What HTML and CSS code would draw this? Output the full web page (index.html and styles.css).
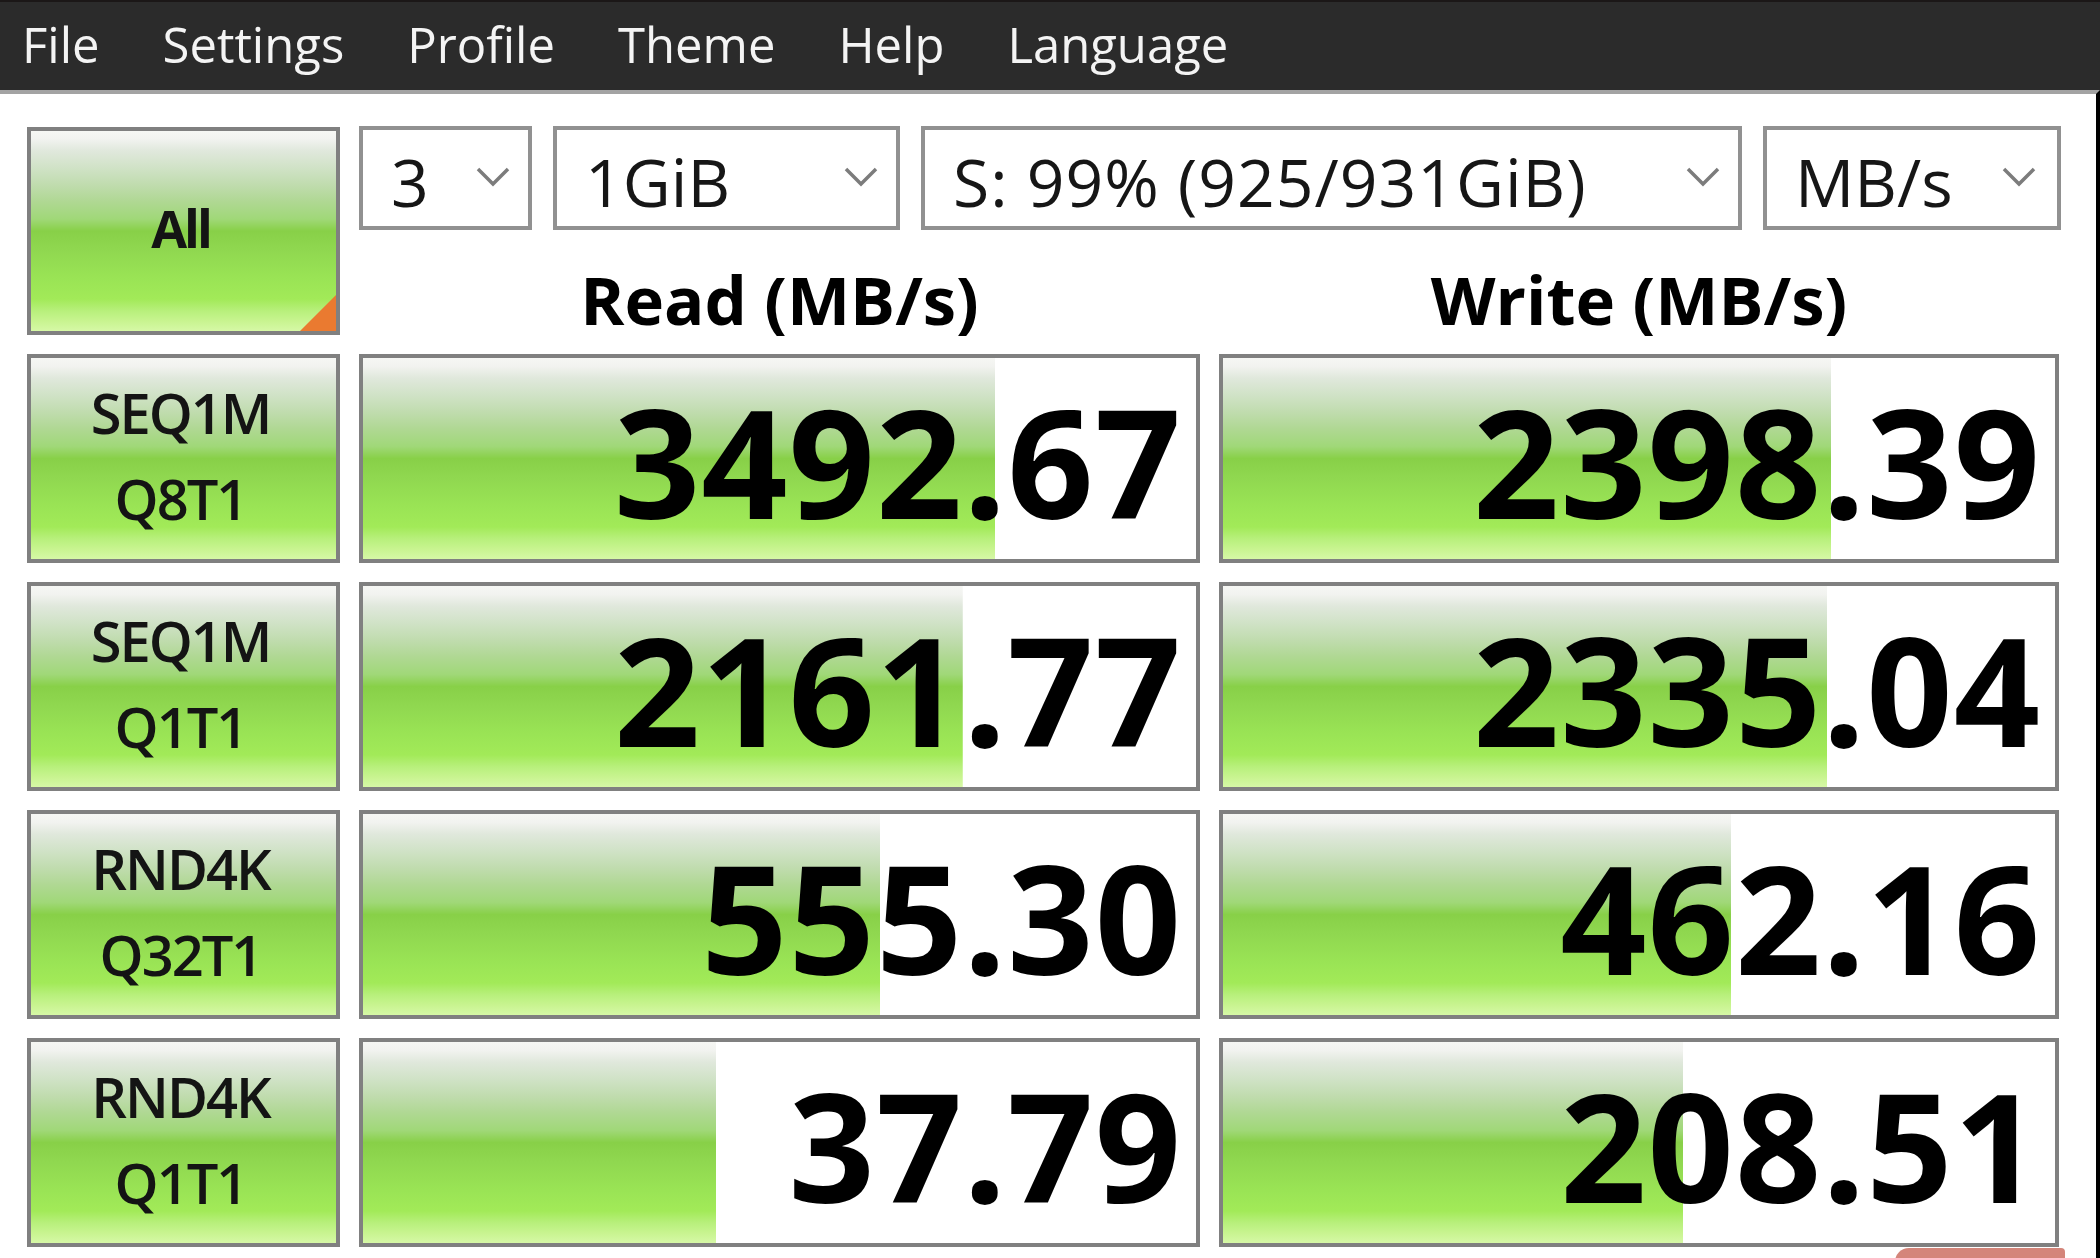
FILE: index.html
```html
<!DOCTYPE html>
<html lang="en">
<head>
<meta charset="utf-8">
<title>CrystalDiskMark</title>
<link rel="stylesheet" href="styles.css">
</head>
<body>
<nav class="menubar">
  <span class="menu-item">File</span>
  <span class="menu-item">Settings</span>
  <span class="menu-item">Profile</span>
  <span class="menu-item">Theme</span>
  <span class="menu-item">Help</span>
  <span class="menu-item">Language</span>
</nav>
<main class="content">
  <div class="grid">
    <div class="label all">All</div>
    <div class="top">
      <div class="dropdowns">
        <div class="dropdown dd-count"><span class="dd-text">3</span><svg class="chev" viewBox="0 0 34 20"><polyline points="2,2 17,17 32,2"/></svg></div>
        <div class="dropdown dd-size"><span class="dd-text">1GiB</span><svg class="chev" viewBox="0 0 34 20"><polyline points="2,2 17,17 32,2"/></svg></div>
        <div class="dropdown dd-drive"><span class="dd-text">S: 99% (925/931GiB)</span><svg class="chev" viewBox="0 0 34 20"><polyline points="2,2 17,17 32,2"/></svg></div>
        <div class="dropdown dd-unit"><span class="dd-text">MB/s</span><svg class="chev" viewBox="0 0 34 20"><polyline points="2,2 17,17 32,2"/></svg></div>
      </div>
      <div class="headers">
        <div class="header">Read (MB/s)</div>
        <div class="header">Write (MB/s)</div>
      </div>
    </div>

    <div class="label"><span>SEQ1M</span><span>Q8T1</span></div>
    <div class="result" style="--w:75.9%">3492.67</div>
    <div class="result" style="--w:73.1%">2398.39</div>

    <div class="label"><span>SEQ1M</span><span>Q1T1</span></div>
    <div class="result" style="--w:72.0%">2161.77</div>
    <div class="result" style="--w:72.6%">2335.04</div>

    <div class="label"><span>RND4K</span><span>Q32T1</span></div>
    <div class="result" style="--w:62.1%">555.30</div>
    <div class="result" style="--w:61.1%">462.16</div>

    <div class="label"><span>RND4K</span><span>Q1T1</span></div>
    <div class="result" style="--w:42.4%">37.79</div>
    <div class="result" style="--w:55.3%">208.51</div>
  </div>
</main>
<div class="peek"></div>
</body>
</html>
```
FILE: styles.css
```css
html, body {
  margin: 0;
  padding: 0;
  height: 100%;
  overflow: hidden;
  background: #ffffff;
}

body {
  position: relative;
  font-family: "Open Sans", "Noto Sans", sans-serif;
  display: flex;
  flex-direction: column;
}

.menubar {
  box-sizing: border-box;
  height: 90px;
  border-top: 2px solid #1b1717;
  background: #2b2b2b;
  display: flex;
  align-items: center;
  gap: 63px;
  padding: 0 0 5px 22px;
  flex: none;
}

.menu-item {
  color: #f4f4f4;
  font-size: 49px;
  line-height: 60px;
}

.content {
  flex: 1;
  box-sizing: border-box;
  border-top: 4px solid #a3a3a3;
  border-right: 4px solid #000000;
  padding: 32px 0 0 27px;
}

.grid {
  display: grid;
  grid-template-columns: 313px 841px 840px;
  grid-auto-rows: 209px;
  column-gap: 19px;
  row-gap: 19px;
}

.label,
.result {
  box-sizing: border-box;
  border: 4px solid #808080;
  --green: linear-gradient(to bottom,
    #f6f7f4 0%, #f2f3f0 4%, #e0e8dc 10%, #cfe2c5 19%, #c0dcae 27%,
    #b0d894 35%, #a0d878 44%, #88d048 50%, #90d850 60%, #9ae455 74%,
    #a2ea58 84%, #b8f07c 90%, #c8f490 95%, #d6f8a6 100%);
}

.label {
  background: var(--green);
  display: flex;
  flex-direction: column;
  align-items: center;
  justify-content: center;
  color: #141414;
  font-size: 56px;
  font-weight: 600;
  line-height: 86px;
  letter-spacing: -2px;
  padding: 0 6px 8px 0;
}

.label.all {
  position: relative;
  margin-top: 1px;
  padding-bottom: 6px;
  font-size: 52px;
  font-weight: 700;
  letter-spacing: -3px;
}

.label.all::after {
  content: "";
  position: absolute;
  right: 0;
  bottom: 0;
  width: 36px;
  height: 36px;
  background: #ea7a30;
  clip-path: polygon(100% 0, 100% 100%, 0 100%);
}

.top {
  grid-column: 2 / 4;
  display: flex;
  flex-direction: column;
}

.dropdowns {
  display: flex;
  gap: 21px;
  height: 104px;
}

.dropdown {
  box-sizing: border-box;
  height: 104px;
  border: 4px solid #919191;
  background: #ffffff;
  display: flex;
  align-items: center;
  justify-content: space-between;
  padding: 6px 18px 0 28px;
}

.dd-count { width: 173px; }
.dd-size { width: 347px; }
.dd-drive { width: 821px; }
.dd-unit { flex: 1; margin-right: -2px; padding-right: 21px; }

.dd-text {
  color: #161616;
  font-size: 66px;
  line-height: 66px;
  white-space: nowrap;
}

.dd-drive .dd-text {
  letter-spacing: 1px;
}

.chev {
  width: 34px;
  height: 20px;
  margin-top: -8px;
  flex: none;
}

.chev polyline {
  fill: none;
  stroke: #7c7c7c;
  stroke-width: 3.5;
}

.headers {
  display: grid;
  grid-template-columns: 841px 840px;
  column-gap: 19px;
  height: 105px;
  box-sizing: border-box;
  padding-top: 36px;
}

.header {
  text-align: center;
  color: #000000;
  font-size: 67px;
  font-weight: 700;
  line-height: 67px;
}

.result {
  background: var(--green) no-repeat, #ffffff;
  background-size: var(--w) 100%, auto;
  display: flex;
  justify-content: flex-end;
  align-items: center;
  padding: 4px 14px 0 0;
  color: #000000;
  font-size: 151px;
  font-weight: 700;
  line-height: 151px;
  letter-spacing: 1px;
}

.peek {
  position: absolute;
  left: 1895px;
  top: 1248px;
  width: 170px;
  height: 20px;
  background: #d4857a;
  border-top-left-radius: 14px;
  border-top-right-radius: 4px;
}
```
